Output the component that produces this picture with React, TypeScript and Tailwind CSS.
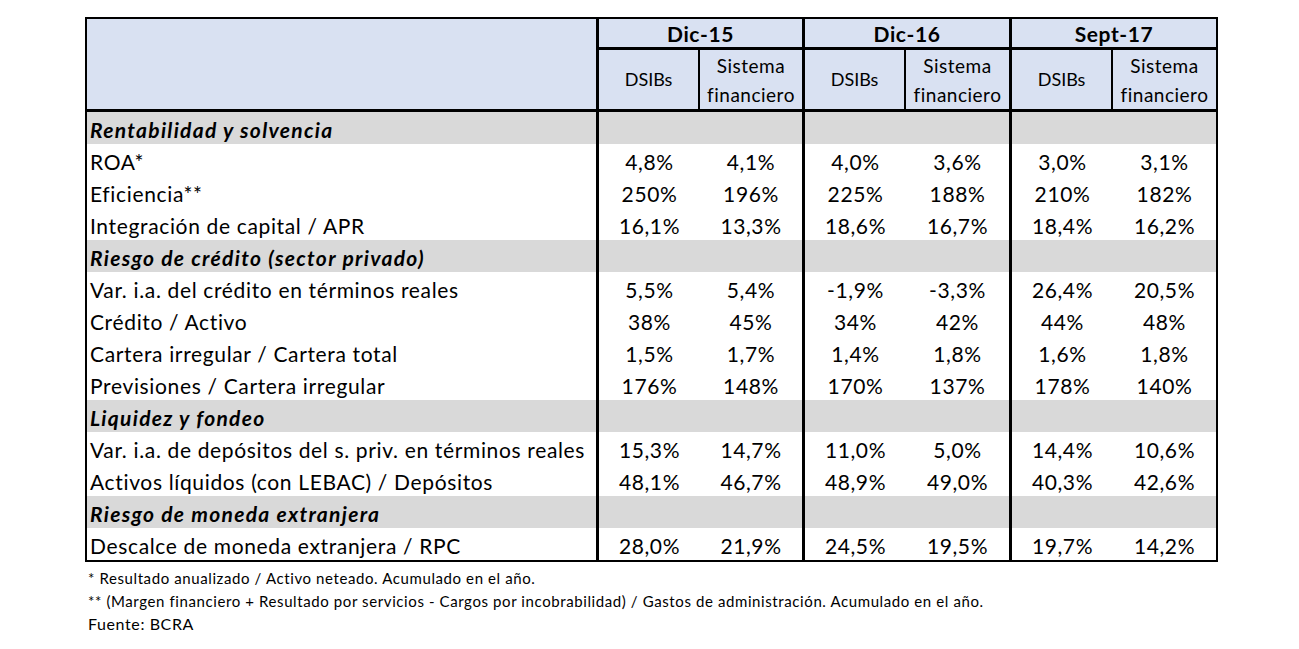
import React from 'react';

type Row =
  | { kind: 'section'; label: string }
  | { kind: 'data'; label: string; values: string[] };

const rows: Row[] = [
  { kind: 'section', label: 'Rentabilidad y solvencia' },
  { kind: 'data', label: 'ROA*', values: ['4,8%', '4,1%', '4,0%', '3,6%', '3,0%', '3,1%'] },
  { kind: 'data', label: 'Eficiencia**', values: ['250%', '196%', '225%', '188%', '210%', '182%'] },
  { kind: 'data', label: 'Integración de capital / APR', values: ['16,1%', '13,3%', '18,6%', '16,7%', '18,4%', '16,2%'] },
  { kind: 'section', label: 'Riesgo de crédito (sector privado)' },
  { kind: 'data', label: 'Var. i.a. del crédito en términos reales', values: ['5,5%', '5,4%', '-1,9%', '-3,3%', '26,4%', '20,5%'] },
  { kind: 'data', label: 'Crédito / Activo', values: ['38%', '45%', '34%', '42%', '44%', '48%'] },
  { kind: 'data', label: 'Cartera irregular / Cartera total', values: ['1,5%', '1,7%', '1,4%', '1,8%', '1,6%', '1,8%'] },
  { kind: 'data', label: 'Previsiones / Cartera irregular', values: ['176%', '148%', '170%', '137%', '178%', '140%'] },
  { kind: 'section', label: 'Liquidez y fondeo' },
  { kind: 'data', label: 'Var. i.a. de depósitos del s. priv. en términos reales', values: ['15,3%', '14,7%', '11,0%', '5,0%', '14,4%', '10,6%'] },
  { kind: 'data', label: 'Activos líquidos (con LEBAC) / Depósitos', values: ['48,1%', '46,7%', '48,9%', '49,0%', '40,3%', '42,6%'] },
  { kind: 'section', label: 'Riesgo de moneda extranjera' },
  { kind: 'data', label: 'Descalce de moneda extranjera / RPC', values: ['28,0%', '21,9%', '24,5%', '19,5%', '19,7%', '14,2%'] },
];

const groups = [
  { title: 'Dic-15', cls: 'w-[206px] border-r-[3px] border-black' },
  { title: 'Dic-16', cls: 'w-[207px] border-r-[3px] border-black' },
  { title: 'Sept-17', cls: 'flex-1' },
];

function HeaderGroup({ title, cls }: { title: string; cls: string }) {
  return (
    <div className={`${cls} flex flex-col`}>
      <div className="h-[31px] border-b-[3px] border-black flex items-center justify-center font-bold text-[21px] tracking-[0.6px] pt-[2px]">
        {title}
      </div>
      <div className="flex-1 flex">
        <div className="w-[101px] border-r-2 border-black flex items-center justify-center text-[18px]">DSIBs</div>
        <div className="flex-1 flex items-center justify-center text-center text-[19px] tracking-[0.5px] leading-[29px]">
          Sistema
          <br />
          financiero
        </div>
      </div>
    </div>
  );
}

function TableRow({ row }: { row: Row }) {
  const isSection = row.kind === 'section';
  return (
    <div className={`h-[32px] flex ${isSection ? 'bg-[#d9d9d9]' : 'bg-white'}`}>
      <div
        className={`w-[512px] border-r-[3px] border-black pl-[3px] flex items-center pt-[3px] whitespace-nowrap ${
          isSection ? 'font-bold italic tracking-[1.3px]' : 'tracking-[0.65px]'
        }`}
      >
        {row.label}
      </div>
      {groups.map((g, gi) => (
        <div key={g.title} className={`${g.cls} flex tracking-[0.6px]`}>
          <div className="w-[101px] flex items-center justify-center pt-[3px]">
            {row.kind === 'data' ? row.values[gi * 2] : ''}
          </div>
          <div className="flex-1 flex items-center justify-center pt-[3px]">
            {row.kind === 'data' ? row.values[gi * 2 + 1] : ''}
          </div>
        </div>
      ))}
    </div>
  );
}

export default function App() {
  return (
    <div className="w-[1299px] h-[649px] bg-white text-black font-['Lato',sans-serif] pt-[17px]">
      <div className="ml-[85px] w-[1133px] border-2 border-black text-[21px]">
        <div className="h-[93px] flex bg-[#d9e1f2] border-b-[3px] border-black">
          <div className="w-[512px] border-r-[3px] border-black" />
          {groups.map((g) => (
            <HeaderGroup key={g.title} title={g.title} cls={g.cls} />
          ))}
        </div>
        {rows.map((r, i) => (
          <TableRow key={i} row={r} />
        ))}
      </div>
      <div className="ml-[88px] mt-[5px] text-[15px] tracking-[0.6px] leading-[23px]">
        <p>* Resultado anualizado / Activo neteado. Acumulado en el año.</p>
        <p>** (Margen financiero + Resultado por servicios - Cargos por incobrabilidad) / Gastos de administración. Acumulado en el año.</p>
        <p className="text-[16px] tracking-[0.6px] leading-[22px]">Fuente: BCRA</p>
      </div>
    </div>
  );
}
